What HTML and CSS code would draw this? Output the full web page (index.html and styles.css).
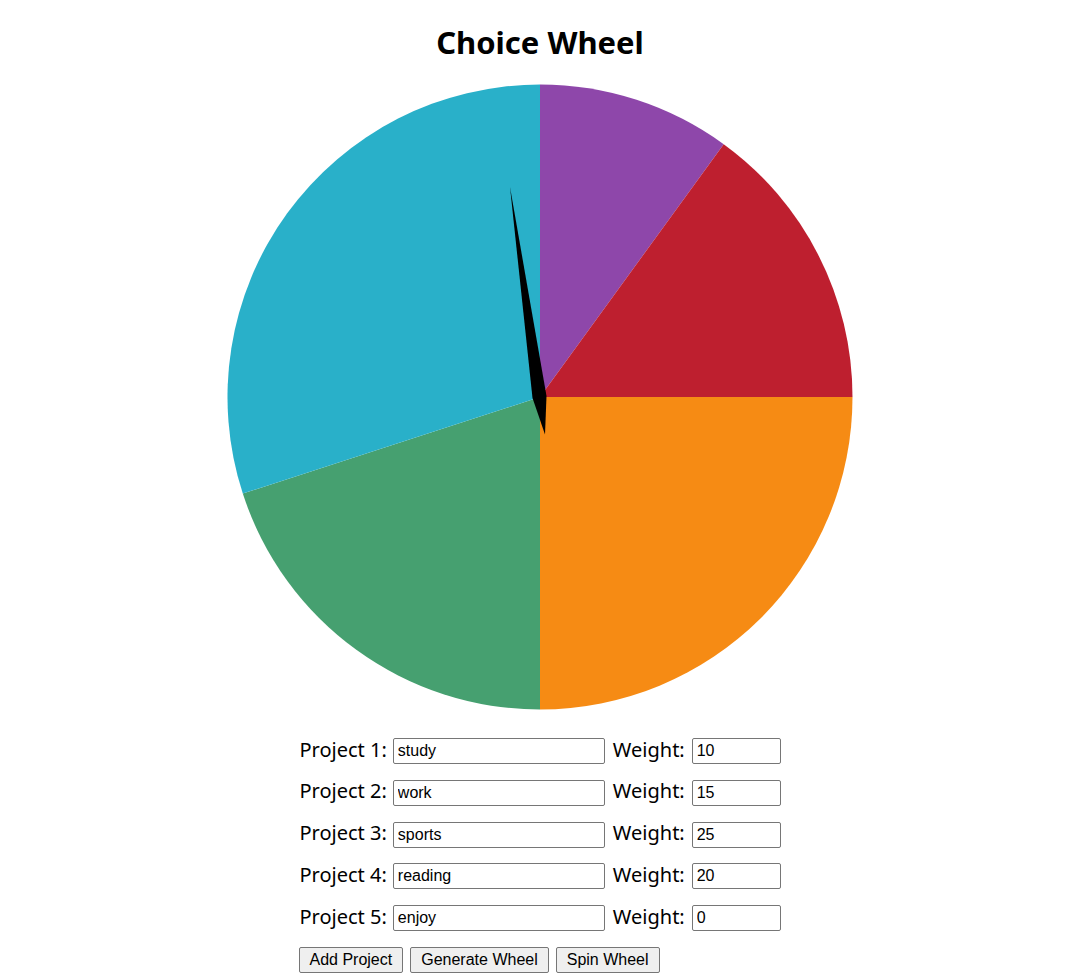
FILE: index.html
```html
<!DOCTYPE html>
<html>
<head>
<meta charset="utf-8">
<link rel="stylesheet" href="styles.css">
</head>
<body>
<div class="page">
  <h1 class="title">Choice Wheel</h1>
  <svg class="wheel" width="626" height="626" viewBox="0 0 626 626">
    <path d="M313 313 L313 0.5 A312.5 312.5 0 0 1 496.7 60.2 Z" fill="#8e47aa"/>
    <path d="M313 313 L496.7 60.2 A312.5 312.5 0 0 1 625.5 313 Z" fill="#be1f2f"/>
    <path d="M313 313 L625.5 313 A312.5 312.5 0 0 1 313 625.5 Z" fill="#f68b14"/>
    <path d="M313 313 L313 625.5 A312.5 312.5 0 0 1 15.8 409.6 Z" fill="#46a070"/>
    <path d="M313 313 L15.8 409.6 A312.5 312.5 0 0 1 313 0.5 Z" fill="#29b0c9"/>
    <polygon points="283,103 319.5,312 318,350.6 305.5,314" fill="#000"/>
  </svg>
  <div class="form">
    <div class="row"><label class="lbl">Project 1:</label><input class="name" type="text" value="study"><label class="lbl lbl-w">Weight:</label><input class="weight" type="text" value="10"></div>
    <div class="row"><label class="lbl">Project 2:</label><input class="name" type="text" value="work"><label class="lbl lbl-w">Weight:</label><input class="weight" type="text" value="15"></div>
    <div class="row"><label class="lbl">Project 3:</label><input class="name" type="text" value="sports"><label class="lbl lbl-w">Weight:</label><input class="weight" type="text" value="25"></div>
    <div class="row"><label class="lbl">Project 4:</label><input class="name" type="text" value="reading"><label class="lbl lbl-w">Weight:</label><input class="weight" type="text" value="20"></div>
    <div class="row"><label class="lbl">Project 5:</label><input class="name" type="text" value="enjoy"><label class="lbl lbl-w">Weight:</label><input class="weight" type="text" value="0"></div>
    <div class="buttons">
      <button class="btn">Add Project</button>
      <button class="btn">Generate Wheel</button>
      <button class="btn">Spin Wheel</button>
    </div>
  </div>
</div>
</body>
</html>
```
FILE: styles.css
```css
html, body { margin: 0; padding: 0; background: #fff; overflow: hidden; }
.page {
  padding-left: 5px;
  display: flex;
  flex-direction: column;
  align-items: center;
  font-family: "Noto Sans", "Open Sans", sans-serif;
}
.title {
  margin: 21px 0 0;
  height: 42px;
  font-size: 31px;
  line-height: 42px;
  font-weight: 700;
  color: #000;
}
.wheel { display: block; margin-top: 21px; }
.form {
  width: 481px;
  margin-top: 28px;
  display: flex;
  flex-direction: column;
  gap: 15.75px;
}
.row {
  display: flex;
  align-items: center;
  height: 26px;
  white-space: nowrap;
}
.row > * { flex-shrink: 0; }
.lbl {
  font-size: 20px;
  line-height: 24px;
  margin-top: -3px;
  color: #000;
  margin-right: 6px;
  white-space: nowrap;
}
.lbl-w { margin-right: 7px; }
.name, .weight {
  box-sizing: border-box;
  height: 26px;
  border: 1px solid #767676;
  border-radius: 2px;
  padding: 1px 4px;
  font-family: "Liberation Sans", Arial, sans-serif;
  font-size: 16px;
  color: #000;
  outline: none;
}
.name { width: 212px; margin-right: 8px; }
.weight { width: 89px; }
.buttons {
  display: flex;
  gap: 7px;
  margin-left: -1px;
}
.btn {
  box-sizing: border-box;
  height: 26px;
  padding: 0 10px;
  border: 1px solid #767676;
  border-radius: 2px;
  background: #efefef;
  font-family: "Liberation Sans", Arial, sans-serif;
  font-size: 16px;
  color: #000;
  white-space: nowrap;
}
```
